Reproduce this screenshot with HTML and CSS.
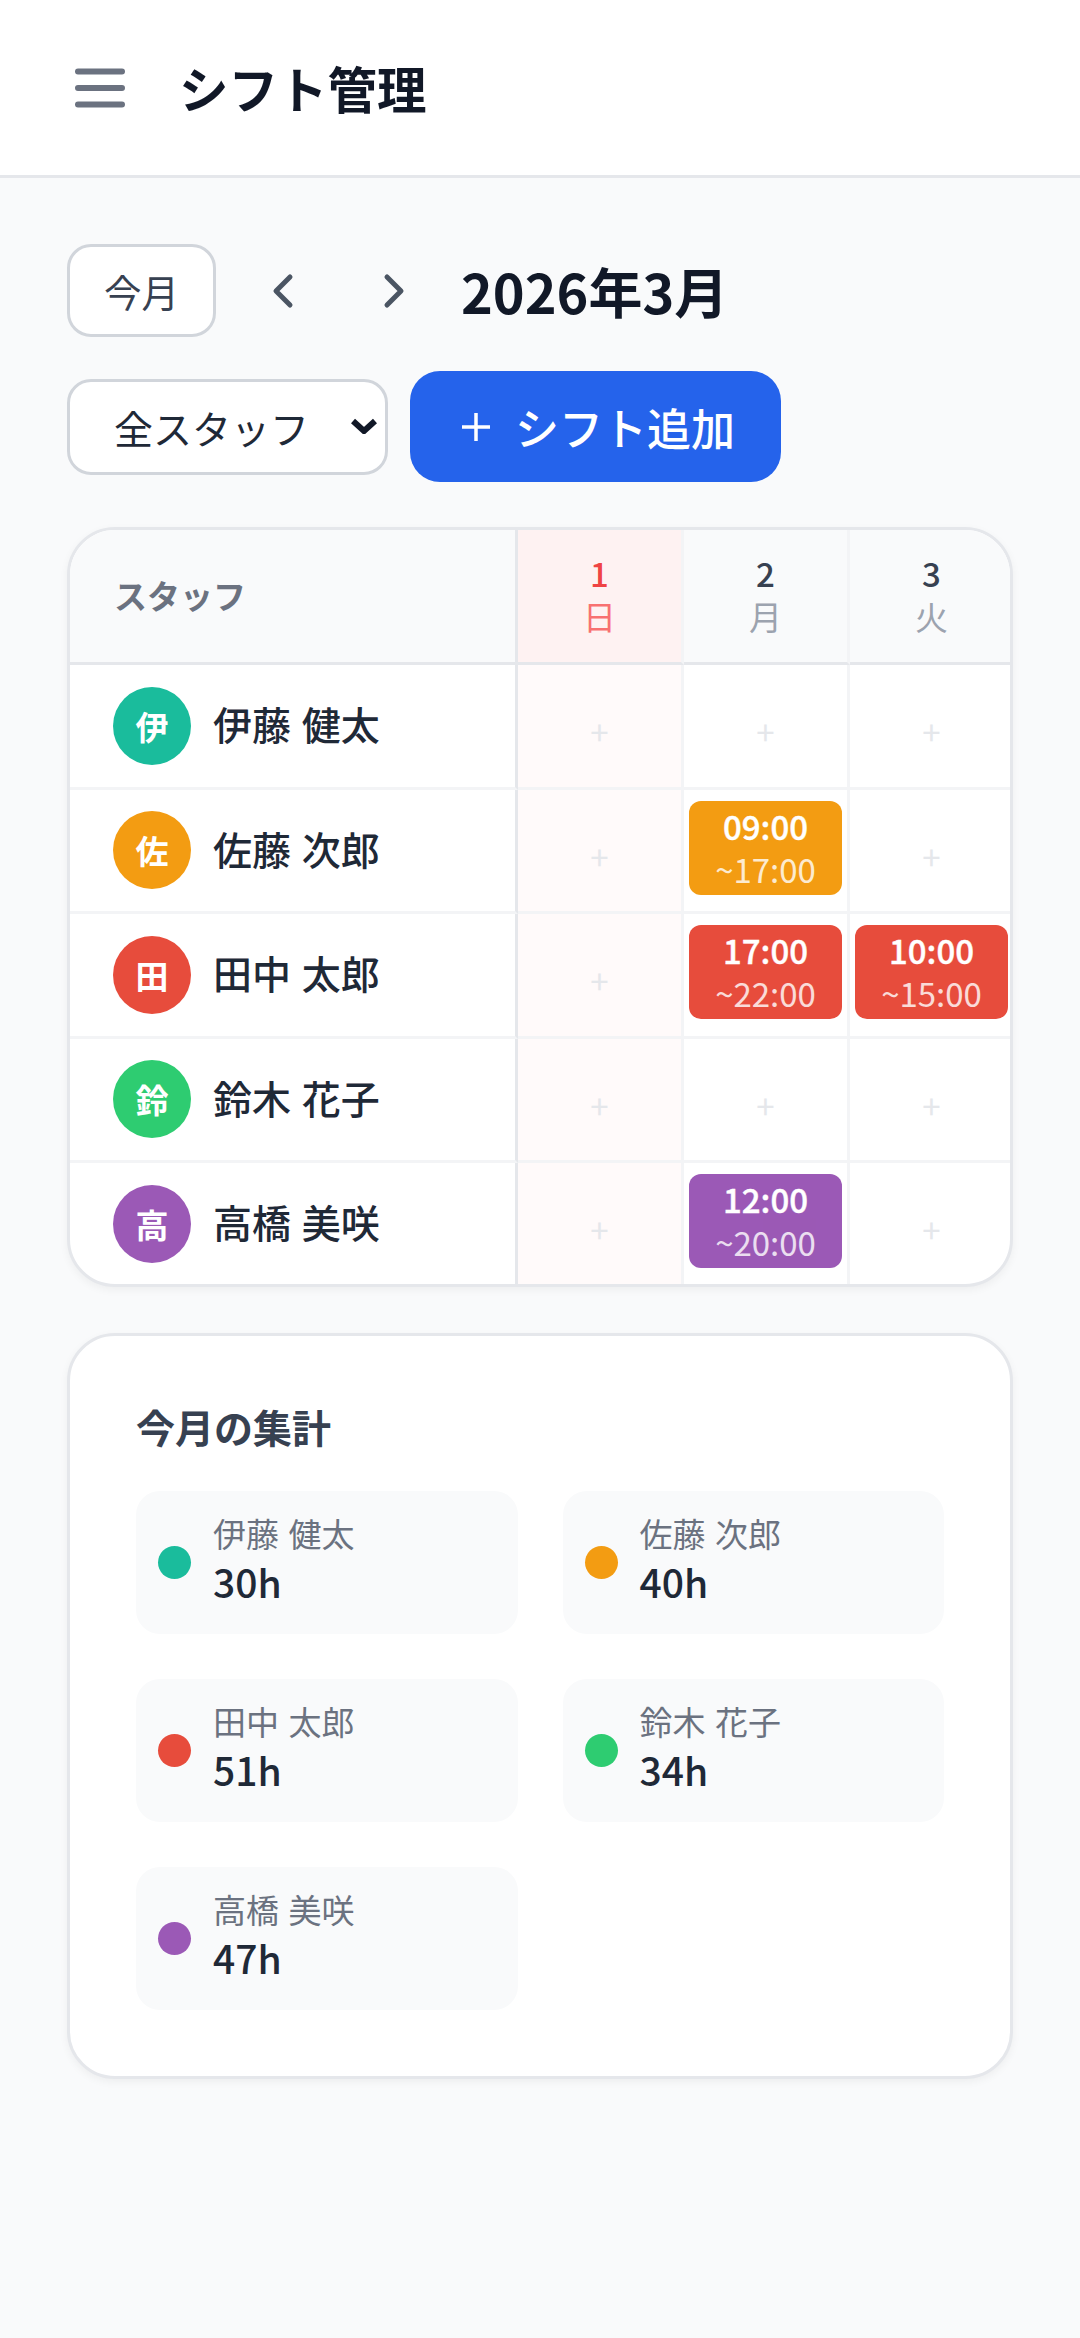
FILE: index.html
```html
<!DOCTYPE html>
<html lang="ja">
<head>
<meta charset="UTF-8">
<title>シフト管理</title>
<link rel="stylesheet" href="styles.css">
</head>
<body>

<header class="app-header">
	<button class="menu-btn" aria-label="メニュー">
		<svg width="54" height="45" viewBox="0 0 54 45"><path d="M5 6.5H49M5 23H49M5 39.5H49" fill="none" stroke="#6b7280" stroke-width="6" stroke-linecap="round"/></svg>
	</button>
	<h1 class="app-title">シフト管理</h1>
</header>

<main class="page">
	<div class="month-row">
		<button class="today-btn">今月</button>
		<button class="nav-btn" aria-label="前の月">
			<svg width="24" height="36" viewBox="0 0 24 36"><path d="M19 4L5 18L19 32" fill="none" stroke="#4b5563" stroke-width="5" stroke-linecap="round" stroke-linejoin="round"/></svg>
		</button>
		<button class="nav-btn" aria-label="次の月">
			<svg width="24" height="36" viewBox="0 0 24 36"><path d="M5 4L19 18L5 32" fill="none" stroke="#4b5563" stroke-width="5" stroke-linecap="round" stroke-linejoin="round"/></svg>
		</button>
		<h2 class="month-title">2026年3月</h2>
	</div>

	<div class="action-row">
		<div class="staff-select">
			<select>
				<option>全スタッフ</option>
			</select>
			<svg class="select-arrow" width="26" height="16" viewBox="0 0 26 16"><path d="M2 3L13 13L24 3" fill="none" stroke="#111827" stroke-width="6"/></svg>
		</div>
		<button class="add-btn">
			<svg width="30" height="30" viewBox="0 0 30 30"><path d="M15 1V29M1 15H29" fill="none" stroke="#fff" stroke-width="3.5"/></svg>
			シフト追加
		</button>
	</div>

	<section class="card shift-card">
		<div class="shift-grid">
			<div class="head-staff">スタッフ</div>
			<div class="head-day sunday"><span class="day-num">1</span><span class="day-name">日</span></div>
			<div class="head-day"><span class="day-num">2</span><span class="day-name">月</span></div>
			<div class="head-day"><span class="day-num">3</span><span class="day-name">火</span></div>

			<div class="staff-cell"><span class="avatar teal">伊</span><span class="staff-name">伊藤 健太</span></div>
			<div class="day-cell sunday">+</div>
			<div class="day-cell">+</div>
			<div class="day-cell">+</div>

			<div class="staff-cell"><span class="avatar orange">佐</span><span class="staff-name">佐藤 次郎</span></div>
			<div class="day-cell sunday">+</div>
			<div class="day-cell has-shift"><div class="shift orange"><b>09:00</b><span>~17:00</span></div></div>
			<div class="day-cell">+</div>

			<div class="staff-cell"><span class="avatar red">田</span><span class="staff-name">田中 太郎</span></div>
			<div class="day-cell sunday">+</div>
			<div class="day-cell has-shift"><div class="shift red"><b>17:00</b><span>~22:00</span></div></div>
			<div class="day-cell has-shift"><div class="shift red"><b>10:00</b><span>~15:00</span></div></div>

			<div class="staff-cell"><span class="avatar green">鈴</span><span class="staff-name">鈴木 花子</span></div>
			<div class="day-cell sunday">+</div>
			<div class="day-cell">+</div>
			<div class="day-cell">+</div>

			<div class="staff-cell"><span class="avatar purple">高</span><span class="staff-name">高橋 美咲</span></div>
			<div class="day-cell sunday">+</div>
			<div class="day-cell has-shift"><div class="shift purple"><b>12:00</b><span>~20:00</span></div></div>
			<div class="day-cell">+</div>
		</div>
	</section>

	<section class="card summary-card">
		<h3 class="summary-title">今月の集計</h3>
		<div class="summary-list">
			<div class="summary-item"><span class="dot teal"></span><div class="sum-text"><div class="sum-name">伊藤 健太</div><div class="sum-hours">30h</div></div></div>
			<div class="summary-item"><span class="dot orange"></span><div class="sum-text"><div class="sum-name">佐藤 次郎</div><div class="sum-hours">40h</div></div></div>
			<div class="summary-item"><span class="dot red"></span><div class="sum-text"><div class="sum-name">田中 太郎</div><div class="sum-hours">51h</div></div></div>
			<div class="summary-item"><span class="dot green"></span><div class="sum-text"><div class="sum-name">鈴木 花子</div><div class="sum-hours">34h</div></div></div>
			<div class="summary-item"><span class="dot purple"></span><div class="sum-text"><div class="sum-name">高橋 美咲</div><div class="sum-hours">47h</div></div></div>
		</div>
	</section>
</main>

</body>
</html>
```

FILE: styles.css
```css
* {
	box-sizing: border-box;
}
html, body {
	margin: 0;
	padding: 0;
}
body {
	min-height: 2338px;
	background-color: #f9fafb;
	color: #1f2937;
	font-family: "Noto Sans CJK JP", "Noto Sans", sans-serif;
}
button, select {
	font-family: inherit;
}

.teal { background-color: #1abc9c; }
.orange { background-color: #f39c12; }
.red { background-color: #e74c3c; }
.green { background-color: #2ecc71; }
.purple { background-color: #9b59b6; }

/* header */
.app-header {
	display: flex;
	align-items: center;
	height: 178px;
	padding-left: 73px;
	background-color: #fff;
	border-bottom: 3px solid #e5e7eb;
}
.menu-btn {
	display: flex;
	padding: 0;
	border: 0;
	background: none;
}
.app-title {
	margin: 0 0 0 52px;
	font-size: 49.5px;
	font-weight: 700;
	color: #111827;
}

.page {
	padding: 66px 67px 0;
}

/* month controls */
.month-row {
	display: flex;
	align-items: center;
	height: 93px;
}
.today-btn {
	width: 149px;
	height: 93px;
	padding: 0;
	border: 3px solid #d1d5db;
	border-radius: 24px;
	background-color: #fff;
	color: #374151;
	font-size: 37.5px;
}
.nav-btn {
	display: flex;
	justify-content: center;
	width: 111px;
	padding: 0;
	border: 0;
	background: none;
}
.today-btn + .nav-btn {
	margin-left: 11px;
}
.month-title {
	margin: 0 0 0 12px;
	font-size: 54px;
	font-weight: 700;
	color: #111827;
}

.action-row {
	display: flex;
	align-items: center;
	gap: 22px;
	margin-top: 34px;
}
.staff-select {
	position: relative;
	width: 321px;
	height: 96px;
}
.staff-select select {
	appearance: none;
	width: 100%;
	height: 100%;
	padding: 0 0 0 44px;
	border: 3px solid #d1d5db;
	border-radius: 24px;
	background-color: #fff;
	color: #1f2937;
	font-size: 39px;
}
.select-arrow {
	position: absolute;
	top: 39px;
	right: 11px;
	pointer-events: none;
}
.add-btn {
	display: flex;
	align-items: center;
	gap: 24px;
	width: 371px;
	height: 111px;
	padding: 0 0 0 51px;
	border: 0;
	border-radius: 30px;
	background-color: #2563eb;
	color: #fff;
	font-size: 44px;
	font-weight: 500;
}

/* cards */
.card {
	border: 3px solid #e5e7eb;
	border-radius: 48px;
	background-color: #fff;
	box-shadow: 0 3px 9px rgba(0, 0, 0, 0.05);
	overflow: hidden;
}
.shift-card {
	margin-top: 45px;
}
.shift-grid {
	display: grid;
	grid-template-columns: 448px 166px 166px 166px;
	grid-template-rows: 135px repeat(4, 124.5px) 121px;
}
.head-staff {
	display: flex;
	align-items: center;
	padding: 0 0 2px 44px;
	background-color: #f9fafb;
	border-right: 3px solid #e5e7eb;
	border-bottom: 3px solid #e5e7eb;
	color: #6b7280;
	font-size: 33px;
	font-weight: 700;
}
.head-day {
	display: flex;
	flex-direction: column;
	align-items: center;
	justify-content: center;
	padding-bottom: 4px;
	background-color: #f9fafb;
	border-right: 3px solid #f3f4f6;
	border-bottom: 3px solid #e5e7eb;
}
.day-num {
	color: #374151;
	font-size: 33px;
	font-weight: 500;
	line-height: 44px;
}
.day-name {
	color: #9ca3af;
	font-size: 33px;
	line-height: 42px;
}
.head-day.sunday {
	background-color: #fef2f2;
}
.head-day.sunday .day-num {
	color: #ef4444;
}
.head-day.sunday .day-name {
	color: #f87171;
}
.staff-cell {
	display: flex;
	align-items: center;
	gap: 22px;
	padding-left: 43px;
	border-right: 3px solid #e5e7eb;
	border-bottom: 3px solid #f3f4f6;
	color: #1f2937;
	font-size: 39px;
	font-weight: 500;
	word-spacing: 2px;
}
.staff-name {
	padding-bottom: 5px;
}
.avatar {
	display: flex;
	align-items: center;
	justify-content: center;
	width: 78px;
	height: 78px;
	border-radius: 50%;
	color: #fff;
	font-size: 33px;
	font-weight: 700;
}
.day-cell {
	display: flex;
	align-items: center;
	justify-content: center;
	padding: 11px 5px 0;
	border-right: 3px solid #f3f4f6;
	border-bottom: 3px solid #f3f4f6;
	color: #e5e7eb;
	font-size: 33px;
}
.day-cell.sunday {
	background-color: #fffafa;
}
.day-cell.has-shift {
	align-items: flex-start;
	padding-top: 11px;
}
.shift {
	display: flex;
	flex-direction: column;
	align-items: center;
	justify-content: center;
	width: 100%;
	height: 94px;
	border-radius: 12px;
	color: #fff;
}
.shift b {
	font-size: 33px;
	font-weight: 500;
	line-height: 43px;
	-webkit-text-stroke: 0.4px #fff;
}
.shift span {
	font-size: 33px;
	line-height: 43px;
	opacity: 0.8;
}
.shift-grid > :nth-last-child(-n+4) {
	border-bottom: 0;
}

/* summary */
.summary-card {
	margin-top: 46px;
	padding: 64px 66px 66px;
}
.summary-title {
	margin: 0;
	color: #374151;
	font-size: 39px;
	font-weight: 700;
	line-height: 52px;
}
.summary-list {
	display: grid;
	grid-template-columns: 1fr 1fr;
	grid-auto-rows: 143px;
	gap: 45px;
	margin-top: 39px;
}
.summary-item {
	display: flex;
	align-items: center;
	gap: 22px;
	padding-left: 22px;
	border-radius: 24px;
	background-color: #f9fafb;
}
.dot {
	width: 33px;
	height: 33px;
	border-radius: 50%;
}
.sum-text {
	padding-bottom: 5px;
}
.sum-name {
	color: #6b7280;
	font-size: 33px;
	line-height: 42px;
	word-spacing: 2px;
}
.sum-hours {
	color: #1f2937;
	font-size: 39px;
	font-weight: 500;
	line-height: 54px;
}
```
